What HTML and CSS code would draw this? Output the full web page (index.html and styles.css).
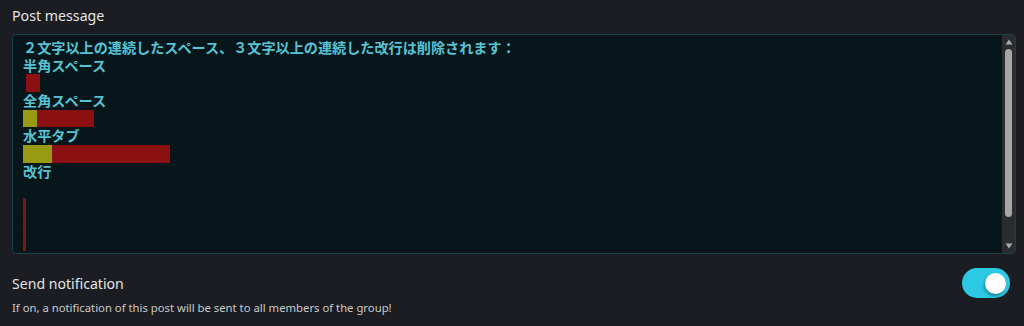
FILE: index.html
```html
<!DOCTYPE html>
<html lang="ja">
<head>
    <meta charset="UTF-8">
    <meta name="viewport" content="width=device-width, initial-scale=1.0">
    <title>Post message</title>
    <link rel="stylesheet" href="styles.css">
</head>
<body>
    <div class="field">
        <div class="label">Post message</div>
        <div class="editor">
            <div class="editor-text">
                <div class="line">２文字以上の連続したスペース、３文字以上の連続した改行は削除されます：</div>
                <div class="line">半角スペース</div>
                <div class="line"><span class="mark red half"></span></div>
                <div class="line">全角スペース</div>
                <div class="line"><span class="mark yellow w14"></span><span class="mark red w57"></span></div>
                <div class="line">水平タブ</div>
                <div class="line"><span class="mark yellow w29"></span><span class="mark red w118"></span></div>
                <div class="line">改行</div>
                <div class="line"></div>
                <div class="line"><span class="mark red nl"></span></div>
                <div class="line"><span class="mark red nl"></span></div>
                <div class="line"><span class="mark red nl"></span></div>
            </div>
            <div class="scrollbar">
                <svg class="arrow" width="8" height="6" viewBox="0 0 8 6"><path d="M4 0.5 L7.5 5.5 L0.5 5.5 Z" fill="#a8a8a8"/></svg>
                <div class="thumb"></div>
                <svg class="arrow" width="8" height="6" viewBox="0 0 8 6"><path d="M0.5 0.5 L7.5 0.5 L4 5.5 Z" fill="#a8a8a8"/></svg>
            </div>
        </div>
    </div>

    <div class="notify">
        <div class="notify-title">Send notification</div>
        <div class="toggle on"><span class="knob"></span></div>
    </div>
    <div class="notify-desc">If on, a notification of this post will be sent to all members of the group!</div>
</body>
</html>
```

FILE: styles.css
```css
body {
    margin: 0;
    background-color: #1b1d23;
    font-family: "Noto Sans", "Noto Sans CJK JP", sans-serif;
    color: #e4e4e4;
}
.field {
    padding: 6px 8px 0 12px;
}
.label {
    font-size: 14.2px;
    line-height: 20px;
    margin-bottom: 8px;
}
.editor {
    display: flex;
    height: 218px;
    border: 1px solid #17414b;
    border-radius: 4px;
    background-color: #07161a;
    overflow: hidden;
}
.editor-text {
    flex: 1;
    padding: 4px 10px 0 10px;
    font-family: "Noto Sans CJK JP", sans-serif;
    font-size: 14.14px;
    font-weight: 700;
    color: #57c3d3;
}
.line {
    height: 17.7px;
    line-height: 17.7px;
    white-space: nowrap;
    display: flex;
}
.mark {
    display: inline-block;
    height: 100%;
}
.red {
    background-color: #8a1011;
}
.yellow {
    background-color: #989a14;
}
.half {
    width: 14px;
    margin-left: 3px;
}
.w14 { width: 14px; }
.w29 { width: 29px; }
.w57 { width: 57px; }
.w118 { width: 118px; }
.nl {
    width: 3px;
    border-top: 1px solid #6e0c0e;
    box-sizing: border-box;
}
.scrollbar {
    width: 13px;
    background-color: #2a2c30;
    display: flex;
    flex-direction: column;
    align-items: center;
    padding: 4px 0 4px 0;
    box-sizing: border-box;
}
.arrow {
    flex: none;
}
.thumb {
    width: 7px;
    flex: 1;
    margin: 4px 0 26px 0;
    border-radius: 4px;
    background-color: #a6a6a6;
}
.notify {
    display: flex;
    justify-content: space-between;
    align-items: center;
    padding: 14px 14px 0 12px;
}
.notify-title {
    font-size: 14.1px;
}
.toggle {
    width: 48px;
    height: 30px;
    border-radius: 15px;
    background-color: #2bc9e4;
    display: flex;
    align-items: center;
    justify-content: flex-end;
    padding-right: 4px;
    box-sizing: border-box;
}
.knob {
    width: 21px;
    height: 21px;
    border-radius: 50%;
    background-color: #ffffff;
    box-shadow: -1px 2px 3px rgba(0,0,0,0.35);
}
.notify-desc {
    padding: 2px 12px 0 12px;
    font-size: 11.3px;
    line-height: 16px;
    color: #c9c9c9;
}
```
